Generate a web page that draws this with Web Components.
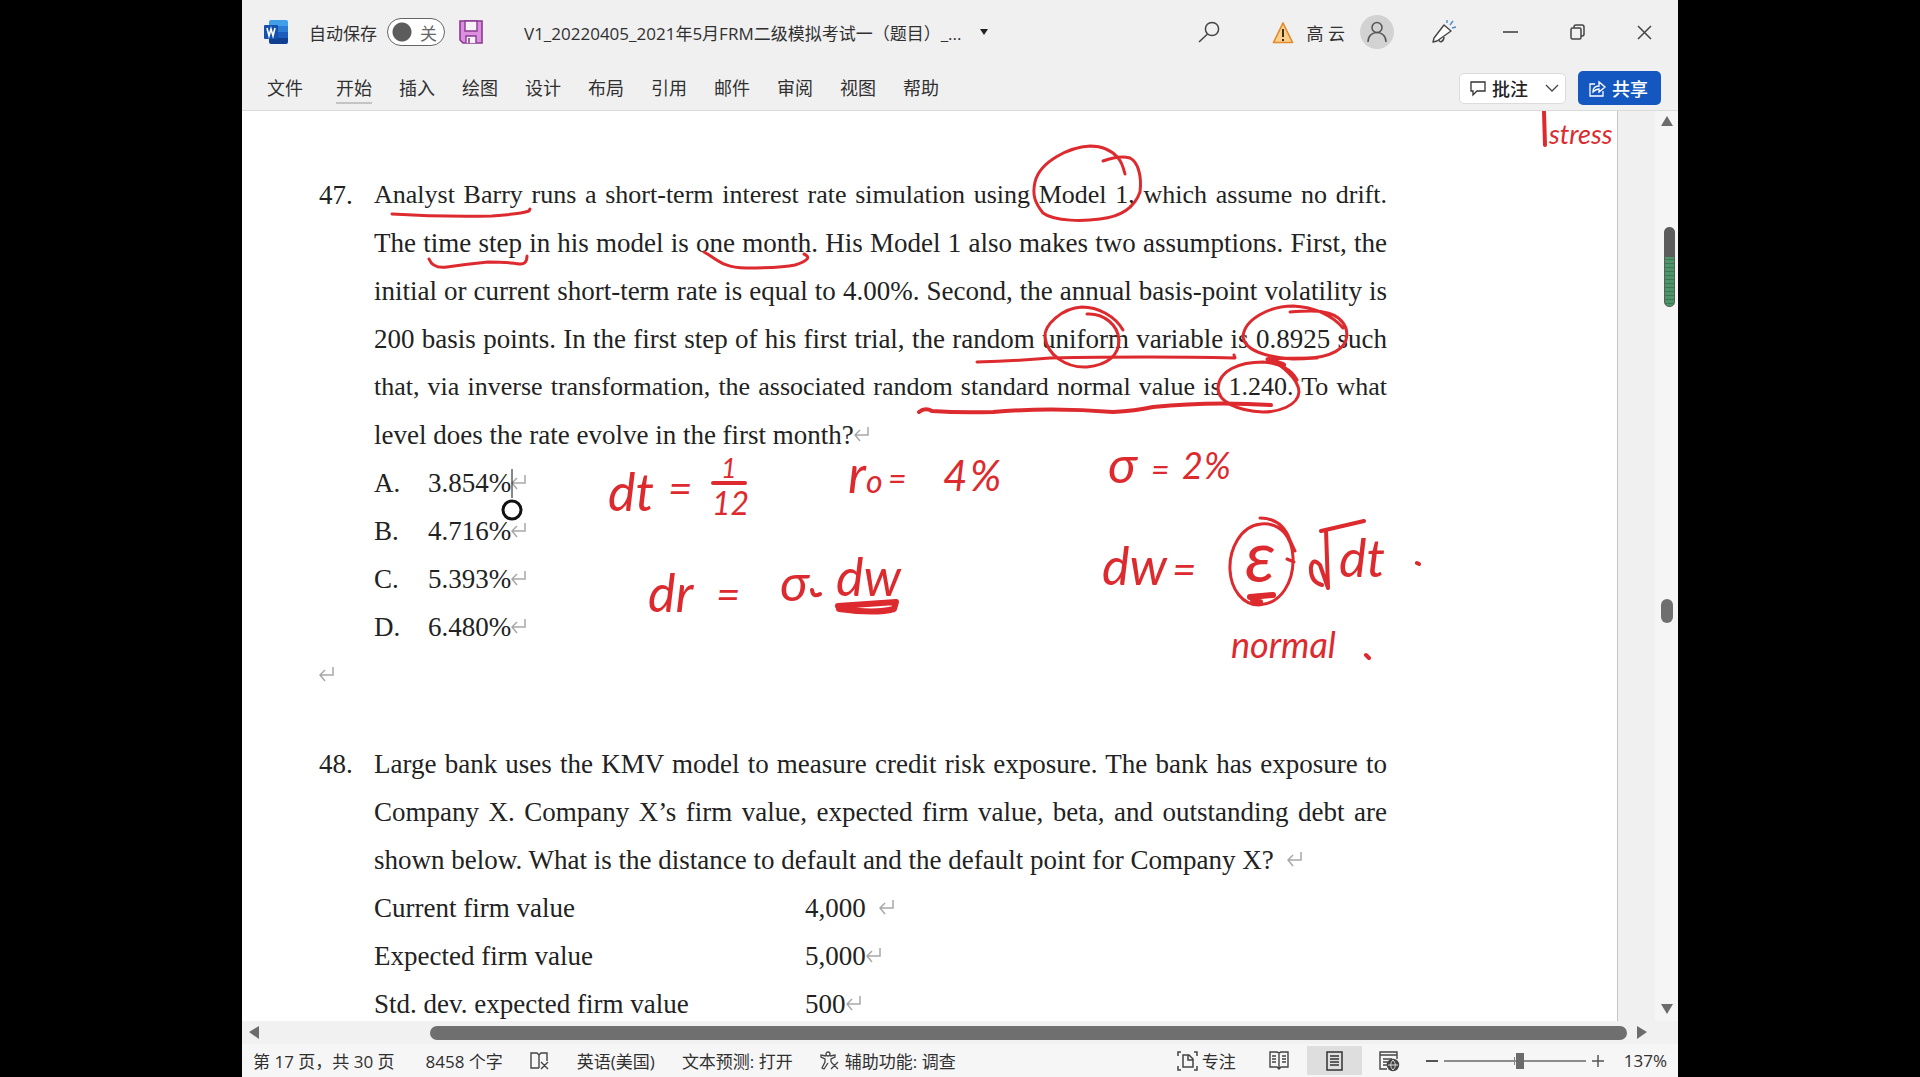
<!DOCTYPE html>
<html lang="zh-CN">
<head>
<meta charset="utf-8">
<title>V1_20220405_2021年5月FRM二级模拟考试一（题目）</title>
<style>
html, body {
  margin: 0;
  height: 100%;
  background: #000;
}
body {
  box-sizing: border-box;
  padding: 0 242px;
  overflow: hidden;
  color: #303030;
  font-family: "Open Sans", "Noto Sans CJK SC", sans-serif;
  font-size: 17px;
}
</style>
</head>
<body>
<word-window>
  <title-bar slot="header" user="高 云">V1_20220405_2021年5月FRM二级模拟考试一（题目）_...</title-bar>
  <ribbon-tabs slot="header" tabs="文件,开始,插入,绘图,设计,布局,引用,邮件,审阅,视图,帮助" active="开始"></ribbon-tabs>
  <document-page>
    <exam-question number="47.">
      <text-line tight>Analyst Barry runs a short-term interest rate simulation using Model 1, which assume no drift.</text-line>
      <text-line>The time step in his model is one month. His Model 1 also makes two assumptions. First, the</text-line>
      <text-line>initial or current short-term rate is equal to 4.00%. Second, the annual basis-point volatility is</text-line>
      <text-line>200 basis points. In the first step of his first trial, the random uniform variable is 0.8925 such</text-line>
      <text-line tight>that, via inverse transformation, the associated random standard normal value is 1.240. To what</text-line>
      <text-line last>level does the rate evolve in the first month?<para-mark></para-mark></text-line>
      <answer-line letter="A.">3.854%</answer-line>
      <answer-line letter="B.">4.716%</answer-line>
      <answer-line letter="C.">5.393%</answer-line>
      <answer-line letter="D.">6.480%</answer-line>
    </exam-question>
    <text-line last><para-mark></para-mark></text-line>
    <exam-question number="48." spaced>
      <text-line>Large bank uses the KMV model to measure credit risk exposure. The bank has exposure to</text-line>
      <text-line>Company X. Company X’s firm value, expected firm value, beta, and outstanding debt are</text-line>
      <text-line last>shown below. What is the distance to default and the default point for Company X?&nbsp; <para-mark></para-mark></text-line>
      <value-table></value-table>
    </exam-question>
    <ink-layer slot="ink"></ink-layer>
  </document-page>
  <scroll-bar slot="vertical" vertical></scroll-bar>
  <scroll-bar slot="footer"></scroll-bar>
  <status-bar slot="footer"></status-bar>
</word-window>

<script>
const ICONS = {
  word: `<svg width="24" height="24" viewBox="0 0 24 24"><path d="M7 0h15a2 2 0 0 1 2 2v5H5V2a2 2 0 0 1 2-2z" fill="#3f9fe8"/><path d="M5 6h19v6H5z" fill="#2b7cd3"/><path d="M5 12h19v6H5z" fill="#1b5dbe"/><path d="M5 18h19v4a2 2 0 0 1-2 2H7a2 2 0 0 1-2-2z" fill="#103f91"/><rect y="5" width="14" height="14" rx="1" fill="#1450ad"/><path d="M3 8l2 8 2-7 2 7 2-8" fill="none" stroke="#fff" stroke-width="1.6"/></svg>`,
  save: `<svg width="24" height="24" viewBox="0 0 24 24"><path d="M1 1h22v22H4l-3-3z" fill="#dc8fdc" stroke="#8a3a94" stroke-width="1.6"/><path d="M6 1h12v10H6z" fill="#f7f2f7" stroke="#8a3a94" stroke-width="1.4"/><path d="M7 23v-7h10v7" fill="#f7f2f7" stroke="#8a3a94" stroke-width="1.4"/><path d="M10 18v5" stroke="#8a3a94" stroke-width="1.6"/></svg>`,
  caret: `<svg width="8" height="6" viewBox="0 0 8 6"><path d="M0 0h8L4 6z" fill="#222"/></svg>`,
  search: `<svg width="22" height="22" viewBox="0 0 22 22" fill="none" stroke="#444" stroke-width="1.5"><circle cx="14" cy="8" r="6.6"/><path d="M9.500 13L1 21"/></svg>`,
  warning: `<svg width="22" height="23" viewBox="0 0 22 23"><path d="M11 2l9.500 19.500h-19z" fill="#fbd08b" stroke="#e28a2b" stroke-width="1.700" stroke-linejoin="round"/><path d="M11 8v8M11 18v2" stroke="#3c3022" stroke-width="2"/></svg>`,
  person: `<svg width="20" height="22" viewBox="0 0 20 22" fill="none" stroke="#555" stroke-width="1.5"><circle cx="10" cy="6.500" r="5"/><path d="M1 21c0-6 4-9.500 9-9.500s9 3.500 9 9.500"/></svg>`,
  horn: `<svg width="24" height="24" viewBox="0 0 24 24" fill="#fff" stroke="#444" stroke-width="1.400" stroke-linejoin="round"><path d="M12 5l7 6L5 21l-4 1 1-4z"/><path d="M7 20c0 3 5 2 5-3" fill="none"/><path d="M15 3V0M18 5l3-4M20 8l4-1" stroke="#4a8ccf" fill="none"/></svg>`,
  minimize: `<svg width="15" height="16" viewBox="0 0 15 16"><path d="M0 8h15" stroke="#444" stroke-width="1.600"/></svg>`,
  restore: `<svg width="15" height="16" viewBox="0 0 15 16" fill="none" stroke="#444" stroke-width="1.500"><rect x="1" y="4" width="10" height="11" rx="1.500"/><path d="M4 4V3a2 2 0 0 1 2-2h6a2 2 0 0 1 2 2v7a2 2 0 0 1-2 2h-1"/></svg>`,
  close: `<svg width="15" height="15" viewBox="0 0 15 15"><path d="M1 1l13 13M14 1L1 14" stroke="#444" stroke-width="1.500"/></svg>`,
  comment: `<svg width="16" height="15" viewBox="0 0 16 15" fill="none" stroke="#333" stroke-width="1.300"><path d="M1 1h14v9H7l-4 4v-4H1z"/></svg>`,
  chevron: `<svg width="14" height="9" viewBox="0 0 14 9" fill="none" stroke="#444" stroke-width="1.300"><path d="M1 1l6 6 6-6"/></svg>`,
  share: `<svg width="17" height="17" viewBox="0 0 17 17" fill="none" stroke="#fff" stroke-width="1.300"><path d="M6 4H1v12h13v-5"/><path d="M4 12c0-4 2-6 6-6V2l6 5-6 5V9c-3 0-4 1-6 3z"/></svg>`,
  proof: `<svg width="20" height="18" viewBox="0 0 20 18" fill="none" stroke="#444" stroke-width="1.400"><path d="M9 16H1V1h6l2 2v13M9 3l2-2h6v8M11 10l7 7M18 10l-7 7"/></svg>`,
  access: `<svg width="19" height="19" viewBox="0 0 19 19" fill="none" stroke="#444" stroke-width="1.300"><circle cx="8" cy="3" r="2"/><path d="M6 5L1 4v2l4 2v3l-3 6 2 1 4-6M10 5l5-1v2l-4 2v3M11 11l7 7M18 11l-7 7"/></svg>`,
  focus: `<svg width="21" height="20" viewBox="0 0 21 20" fill="none" stroke="#444" stroke-width="1.500"><path d="M4 1H1v4M17 1h3v4M1 15v4h3M20 15v4h-3"/><path d="M6 4h6l4 4v8H6zM11 4v5h5"/></svg>`,
  book: `<svg width="20" height="19" viewBox="0 0 20 19" fill="none" stroke="#444" stroke-width="1.400"><path d="M1 1h7l2 1 2-1h7v15h-7l-2 2-2-2H1zM10 2v15M3 5h4M3 8h4M3 11h4M13 5h4M13 8h4M13 11h4"/></svg>`,
  print: `<svg width="17" height="20" viewBox="0 0 17 20" fill="none" stroke="#333" stroke-width="1.500"><path d="M1 1h15v18H1zM4 5h9M4 8h9M4 11h9M4 14h9"/></svg>`,
  web: `<svg width="21" height="20" viewBox="0 0 21 20" fill="none" stroke="#444" stroke-width="1.400"><path d="M8 18H1V1h17v7M1 4h17M4 8h9M4 11h5M4 14h4"/><circle cx="14" cy="14" r="5.500" fill="#444"/><path d="M9 14h10M14 9c-3 3-3 7 0 10M14 9c3 3 3 7 0 10" stroke="#ddd" stroke-width="1"/></svg>`,
};

const BUTTON_RESET = `
button {
  display: flex;
  align-items: center;
  justify-content: center;
  margin: 0;
  padding: 0;
  border: 0;
  background: none;
  color: inherit;
  font: inherit;
}`;

// Small base class, every element renders once into its own shadow root
class BaseElement extends HTMLElement {
  connectedCallback() {
    if (this.shadowRoot) return;
    this.attachShadow({ mode: 'open' });
    const template = document.createElement('template');
    template.innerHTML = this.render();
    this.shadowRoot.appendChild(template.content.cloneNode(true));
  }
}

customElements.define('ui-icon', class extends BaseElement {
  render() {
    return `<style>:host { display: inline-flex; } svg { display: block; overflow: visible; }</style>
      ${ICONS[this.getAttribute('name')]}`;
  }
});

customElements.define('word-window', class extends BaseElement {
  render() {
    return `
<style>
:host {
  display: flex;
  flex-direction: column;
  height: 100vh;
  background: #f0f0f0;
}
.header { border-bottom: 1px solid #dadada; }
main { display: flex; flex: 1; min-height: 0; }
</style>
<div class="header"><slot name="header"></slot></div>
<main><slot></slot><slot name="vertical"></slot></main>
<slot name="footer"></slot>`;
  }
});

customElements.define('title-bar', class extends BaseElement {
  render() {
    return `
<style>
:host {
  display: flex;
  align-items: center;
  height: 64px;
  padding: 0 26px 2px 22px;
}
${BUTTON_RESET}
.left, .right, .autosave { display: flex; align-items: center; }
.autosave { gap: 10px; margin: 0 14px 0 21px; }
.switch { display: grid; align-items: center; }
.switch > * { grid-area: 1 / 1; }
.switch span { justify-self: end; padding-right: 8px; color: #666; }
input {
  appearance: none;
  box-sizing: border-box;
  width: 58px;
  height: 28px;
  margin: 0;
  border: 1px solid #666;
  border-radius: 14px;
  background: radial-gradient(circle at 14px 13px, #5c5c5c 9px, #fff 10px);
}
h1 { margin: 0 18px 0 41px; font: inherit; font-size: 17px; white-space: nowrap; }
.right { margin-left: auto; }
.user { margin: 0 15px 0 13px; }
.avatar { width: 34px; height: 34px; border-radius: 50%; background: #d2d2d2; }
.search { margin-right: 52px; }
.horn { margin: 0 47px 0 38px; }
.window { display: flex; gap: 52px; }
</style>
<div class="left">
  <ui-icon name="word"></ui-icon>
  <div class="autosave">
    <label for="autosave">自动保存</label>
    <div class="switch"><input id="autosave" type="checkbox" role="switch"><span>关</span></div>
  </div>
  <button aria-label="保存"><ui-icon name="save"></ui-icon></button>
</div>
<h1><slot></slot></h1>
<button aria-label="文件信息"><ui-icon name="caret"></ui-icon></button>
<div class="right">
  <button class="search" aria-label="搜索"><ui-icon name="search"></ui-icon></button>
  <ui-icon name="warning"></ui-icon>
  <span class="user">${this.getAttribute('user')}</span>
  <button class="avatar" aria-label="帐户"><ui-icon name="person"></ui-icon></button>
  <button class="horn" aria-label="即将推出"><ui-icon name="horn"></ui-icon></button>
  <div class="window">
    <button aria-label="最小化"><ui-icon name="minimize"></ui-icon></button>
    <button aria-label="还原"><ui-icon name="restore"></ui-icon></button>
    <button aria-label="关闭"><ui-icon name="close"></ui-icon></button>
  </div>
</div>`;
  }
});

customElements.define('ribbon-tabs', class extends BaseElement {
  render() {
    const active = this.getAttribute('active');
    const tabs = this.getAttribute('tabs').split(',')
      .map(tab => `<button${tab === active ? ' class="active"' : ''}>${tab}</button>`).join('');
    return `
<style>
:host {
  display: flex;
  align-items: center;
  justify-content: space-between;
  height: 44px;
  padding: 0 17px 0 25px;
}
${BUTTON_RESET}
nav { display: flex; gap: 27px; font-size: 18px; }
nav button { height: 32px; border-bottom: 2px solid transparent; }
nav button:first-child { margin-right: 6px; }
nav .active { border-color: #c4c4c4; }
.actions { display: flex; align-items: center; gap: 12px; font-size: 18px; font-weight: 500; }
.comments {
  gap: 6px;
  box-sizing: border-box;
  height: 31px;
  padding: 0 6px 0 10px;
  border: 1px solid #dcdcdc;
  border-radius: 5px;
  background: #fff;
  color: #222;
}
.comments ui-icon:last-child { margin-left: 11px; }
.share {
  gap: 6px;
  height: 34px;
  padding: 0 13px 0 11px;
  border-radius: 5px;
  background: #1557c0;
  color: #fff;
}
</style>
<nav>${tabs}</nav>
<div class="actions">
  <button class="comments"><ui-icon name="comment"></ui-icon>批注<ui-icon name="chevron"></ui-icon></button>
  <button class="share"><ui-icon name="share"></ui-icon>共享</button>
</div>`;
  }
});

customElements.define('document-page', class extends BaseElement {
  render() {
    return `
<style>
:host {
  display: block;
  position: relative;
  flex: 1;
  overflow: hidden;
  box-sizing: border-box;
  margin-right: 37px;
  padding: 60px 230px 0 77px;
  border-right: 1px solid #c6c6c6;
  background: #fff;
  color: #222;
  font-family: "Liberation Serif", serif;
  font-size: 27px;
  line-height: 48px;
}
</style>
<slot></slot>
<slot name="ink"></slot>`;
  }
});

customElements.define('exam-question', class extends BaseElement {
  render() {
    return `
<style>
:host { display: grid; grid-template-columns: 55px 1fr; }
:host([spaced]) { margin-top: 41px; }
div { min-width: 0; }
</style>
<span>${this.getAttribute('number')}</span>
<div><slot></slot></div>`;
  }
});

customElements.define('text-line', class extends BaseElement {
  render() {
    return `
<style>
:host { display: block; height: 48px; text-align-last: justify; }
:host([last]) { text-align-last: start; white-space: nowrap; }
:host([tight]) { font-size: 26px; }
</style>
<slot></slot>`;
  }
});

customElements.define('para-mark', class extends BaseElement {
  render() {
    return `
<style>:host { display: inline-block; } svg { display: block; }</style>
<svg width="16" height="17" viewBox="0 0 16 17" fill="none" stroke="#a8a8a8" stroke-width="1.5"><path d="M14 0v8H2M6 3L1 8l5 6"/></svg>`;
  }
});

customElements.define('answer-line', class extends BaseElement {
  render() {
    return `
<style>:host { display: grid; grid-template-columns: 54px 1fr; }</style>
<span>${this.getAttribute('letter')}</span>
<span><slot></slot><para-mark></para-mark></span>`;
  }
});

customElements.define('value-table', class extends BaseElement {
  render() {
    return `
<style>
:host { display: block; }
table { width: 100%; border-collapse: collapse; }
th, td { height: 48px; padding: 0; font-weight: normal; text-align: left; }
th { width: 431px; }
</style>
<table>
  <tr><th scope="row">Current firm value</th><td>4,000&nbsp; <para-mark></para-mark></td></tr>
  <tr><th scope="row">Expected firm value</th><td>5,000<para-mark></para-mark></td></tr>
  <tr><th scope="row">Std. dev. expected firm value</th><td>500<para-mark></para-mark></td></tr>
</table>`;
  }
});

// Pen annotations laid over the page, plus the text caret
customElements.define('ink-layer', class extends BaseElement {
  render() {
    return `
<style>
:host {
  position: absolute;
  left: 0;
  top: 0;
  width: 100%;
  pointer-events: none;
}
svg { display: block; width: 100%; }
.pen { fill: none; stroke: #dc2a2e; stroke-width: 3; stroke-linecap: round; stroke-linejoin: round; }
.bold { stroke-width: 6; }
.fine { stroke-width: 4; }
text { fill: #dc2a2e; font-family: Lato, sans-serif; font-style: italic; }
.caret { fill: none; stroke: #111; stroke-width: 3; }
.xs { font-size: 27px; }
.s { font-size: 32px; }
.n { font-size: 36px; }
.m { font-size: 42px; }
.l { font-size: 52px; }
.xl { font-size: 72px; }
</style>
<svg viewBox="242 111 1375 910">
  <g class="pen">
    <path d="M392 214Q440 217 492 216Q520 214 529 211L530 209"/>
    <path d="M429 259Q433 269 447 267Q468 264 488 262Q508 262 519 264Q527 265 527 256"/>
    <path d="M704 252C716 258 722 268 746 268C765 268 782 268 795 265C808 261 811 257 804 254"/>
    <path d="M1125 174Q1122 162 1118 158C1110 148 1100 146 1090 146C1070 147 1040 161 1035 182C1032 195 1035 203 1043 213C1055 222 1085 221 1100 219C1118 217 1134 209 1140 192C1142 176 1138 162 1130 158Q1120 155 1103 161"/>
    <path d="M1123 330C1115 316 1098 307 1082 307C1062 308 1044 325 1045 337C1047 355 1066 368 1087 367C1108 365 1119 355 1119 340C1118 325 1104 313 1087 314"/>
    <path d="M977 362Q1017 361 1050 358Q1150 356 1235 358L1234 355"/>
    <path d="M1290 312Q1315 310 1323 312C1338 314 1350 325 1346 340C1342 352 1325 359 1293 359C1265 357 1245 350 1243 337C1244 319 1270 306 1293 306C1315 307 1333 316 1343 328"/>
    <path d="M1267 359C1282 364 1299 380 1299 392C1298 406 1278 412 1263 412C1238 411 1218 402 1218 388C1219 370 1240 362 1263 362C1280 363 1292 370 1297 380M1267 359Q1280 358 1317 358"/>
    <path class="fine" d="M919 412Q925 407 932 411Q960 413 993 412Q1050 407 1113 412Q1135 411 1153 407Q1210 401 1271 405"/>
    <path class="fine" d="M713 483H745M1366 655L1369 658M1417 563L1419 564M812 590Q813 598 820 594"/>
    <path d="M1260 518Q1282 518 1290 540L1295 551M1261 524C1240 526 1229 550 1230 570C1231 590 1243 605 1259 605C1281 604 1294 582 1293 557C1292 538 1281 522 1261 524M1287 559L1294 562"/>
    <path class="fine" d="M1322 585Q1310 582 1311 567Q1313 557 1320 565L1328 588L1326 530M1321 531L1364 521M1544 112L1545 145"/>
    <path class="bold" d="M838 606Q868 604 896 602L894 609Q876 614 839 609M1250 597L1273 595M1253 600L1260 602"/>
    <path class="bold" d="M1269 360L1283 365"/>
  </g>
  <text x="608" y="511" class="l">dt</text>
  <text x="668" y="503" class="m">=</text>
  <text x="721" y="478" class="xs">1</text>
  <text x="712" y="515" class="s">12</text>
  <text x="848" y="493" class="l">r</text>
  <text x="866" y="493" class="s">o</text>
  <text x="888" y="490" class="s">=</text>
  <text x="943" y="491" class="m">4</text>
  <text x="970" y="491" class="m">%</text>
  <text x="1108" y="483" class="l">σ</text>
  <text x="1151" y="481" class="s">=</text>
  <text x="1182" y="479" class="n">2</text>
  <text x="1204" y="479" class="n">%</text>
  <text x="648" y="612" class="l">dr</text>
  <text x="716" y="609" class="m">=</text>
  <text x="780" y="601" class="l">σ</text>
  <text x="836" y="596" class="l">dw</text>
  <text x="1102" y="585" class="l">dw</text>
  <text x="1172" y="584" class="m">=</text>
  <text x="1245" y="582" class="xl">ε</text>
  <text x="1339" y="577" class="l">dt</text>
  <text x="1231" y="658" class="n">normal</text>
  <text x="1549" y="144" class="xs">stress</text>
  <g class="caret">
    <path d="M512 469V498" stroke-width="1"/>
    <circle cx="512" cy="510" r="9"/>
  </g>
</svg>`;
  }
});

customElements.define('scroll-bar', class extends BaseElement {
  render() {
    return `
<style>
:host {
  display: flex;
  align-items: center;
  box-sizing: border-box;
  height: 23px;
  padding: 0 31px 0 7px;
  background: #f1f1f1;
}
:host([vertical]) {
  position: relative;
  flex-direction: column;
  width: 23px;
  height: auto;
  padding: 5px 0 7px;
  background: #f5f5f5;
}
${BUTTON_RESET}
path { fill: #6c6c6c; }
svg { display: block; }
.before { flex: 171; }
.thumb { flex: 1197; height: 14px; border-radius: 7px; background: #6f6f6f; }
.after { flex: 10; }
:host([vertical]) .before { flex: 473; }
:host([vertical]) .thumb { flex: none; width: 12px; height: 24px; border-radius: 6px; }
:host([vertical]) .after { flex: 381; }
/* sound level meter floating above the track */
.meter {
  position: absolute;
  left: 9px;
  top: 116px;
  box-sizing: border-box;
  width: 11px;
  height: 80px;
  border: 1px solid #5c5c5c;
  border-radius: 5px;
  background: linear-gradient(#5c5c5c 29px, transparent 29px), repeating-linear-gradient(#4d9468 0 3px, #3c7853 3px 4px);
}
</style>
${this.hasAttribute('vertical') ? `
<button aria-label="向上滚动"><svg width="12" height="10"><path d="M6 0l6 10H0z"/></svg></button>
<div class="before"></div><div class="thumb"></div><div class="after"></div>
<button aria-label="向下滚动"><svg width="12" height="10"><path d="M0 0h12L6 10z"/></svg></button>
<div class="meter"></div>` : `
<button aria-label="向左滚动"><svg width="10" height="13"><path d="M10 0v13L0 6z"/></svg></button>
<div class="before"></div><div class="thumb"></div><div class="after"></div>
<button aria-label="向右滚动"><svg width="10" height="13"><path d="M0 0l10 6-10 7z"/></svg></button>`}`;
  }
});

customElements.define('status-bar', class extends BaseElement {
  render() {
    return `
<style>
:host {
  display: flex;
  justify-content: space-between;
  height: 33px;
  padding: 0 11px;
  background: #f6f6f6;
  white-space: nowrap;
}
${BUTTON_RESET}
div { display: flex; align-items: center; }
.info { gap: 27px; }
.pages { margin-right: 4px; }
button { gap: 6px; }
.view { width: 55px; height: 29px; }
.view.on { background: #dedede; }
.focus { gap: 4px; margin-right: 16px; }
.zoom { gap: 6px; margin-left: 9px; }
.zoom button { width: 12px; height: 20px; }
output { margin-left: 14px; }
input {
  appearance: none;
  width: 142px;
  height: 18px;
  margin: 0;
  background: linear-gradient(#808080, #808080) center / 1px 8px no-repeat;
}
input::-webkit-slider-runnable-track { height: 2px; background: #8c8c8c; }
input::-webkit-slider-thumb {
  appearance: none;
  width: 8px;
  height: 16px;
  margin-top: -7px;
  background: #6b6b6b;
}
</style>
<div class="info">
  <button class="pages">第 17 页，共 30 页</button>
  <button>8458 个字</button>
  <button aria-label="校对"><ui-icon name="proof"></ui-icon></button>
  <button>英语(美国)</button>
  <button>文本预测: 打开</button>
  <button><ui-icon name="access"></ui-icon>辅助功能: 调查</button>
</div>
<div>
  <button class="focus"><ui-icon name="focus"></ui-icon>专注</button>
  <button class="view" aria-label="阅读视图"><ui-icon name="book"></ui-icon></button>
  <button class="view on" aria-label="页面视图"><ui-icon name="print"></ui-icon></button>
  <button class="view" aria-label="Web 版式视图"><ui-icon name="web"></ui-icon></button>
  <div class="zoom">
    <button aria-label="缩小"><svg width="12" height="12"><path d="M0 6h12" stroke="#555" stroke-width="2"/></svg></button>
    <input type="range" min="0" max="100" value="54" aria-label="缩放">
    <button aria-label="放大"><svg width="12" height="12"><path d="M0 6h12M6 0v12" stroke="#555" stroke-width="1.500"/></svg></button>
    <output>137%</output>
  </div>
</div>`;
  }
});
</script>
</body>
</html>
